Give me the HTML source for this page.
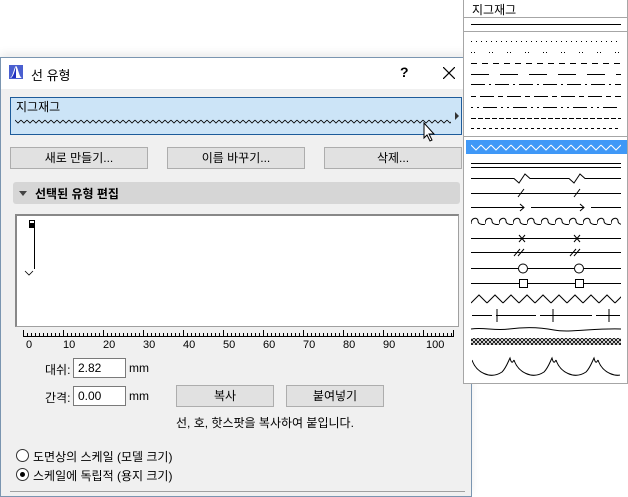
<!DOCTYPE html>
<html><head><meta charset="utf-8">
<style>
*{box-sizing:border-box;margin:0;padding:0}
body{width:628px;height:493px;background:#fff;position:relative;overflow:hidden;font-family:"Liberation Sans","Noto Sans CJK KR","NanumGothic",sans-serif;font-size:12px;color:#000}
.abs{position:absolute}
.dlg{left:0;top:57px;width:472px;height:440px;background:#f0f0f0;border:1px solid #7a95b0;box-shadow:0 -4px 8px rgba(0,0,0,0.08)}
.title{left:0;top:0;width:470px;height:31px;background:#fff}
.btn{position:absolute;height:22px;background:#e1e1e1;border:1px solid #adadad;text-align:center;line-height:20px}
.inp{position:absolute;width:53px;height:20px;background:#fff;border:1px solid #7a7a7a;padding-left:4px;line-height:18px}
.radio{position:absolute;width:13px;height:13px;border:1px solid #333;border-radius:50%;background:#fff}
</style></head><body>
<div class="abs dlg">
 <div class="abs title">
  <svg class="abs" style="left:8px;top:7px" width="14" height="14"><rect x="0" y="0" width="14" height="14" fill="#4a5fd0"/><path d="M1 13 C4 12 5 2 7 1 C9 2 10 12 13 13Z" fill="#fff"/><path d="M2 13 C5 11 6 4 7 2 L7 13Z" fill="#2030c0"/></svg>
  <div class="abs" style="left:30px;top:7px;font-size:13px">선 유형</div>
  <div class="abs" style="left:399px;top:6px;font-size:14px;font-weight:bold">?</div>
  <svg class="abs" style="left:442px;top:9px" width="12" height="12"><path d="M0 0L12 12M12 0L0 12" stroke="#000" stroke-width="1.2"/></svg>
 </div>
 <div class="abs" style="left:9px;top:39px;width:452px;height:38px;background:#cce4f7;border:1px solid #1d5b9a">
  <div class="abs" style="left:5px;top:0px">지그재그</div>
  <svg class="abs" style="left:4px;top:20px" width="436" height="8"><defs><pattern id="zz" width="6" height="8" patternUnits="userSpaceOnUse"><path d="M0 2L3 5L6 2" fill="none" stroke="#000" stroke-width="0.8"/></pattern></defs><rect width="436" height="8" fill="url(#zz)"/></svg>
  <svg class="abs" style="left:444px;top:14px" width="5" height="8"><path d="M0 0L4 4L0 8Z" fill="#333"/></svg>
 </div>
 <svg class="abs" style="left:422px;top:64px" width="14" height="20"><path d="M1 1L1 16L4 13L7 19L9 18L6 12L11 12Z" fill="#fff" stroke="#000"/></svg>
 <div class="btn" style="left:9px;top:89px;width:138px">새로 만들기...</div>
 <div class="btn" style="left:166px;top:89px;width:138px">이름 바꾸기...</div>
 <div class="btn" style="left:323px;top:89px;width:138px">삭제...</div>
 <div class="abs" style="left:12px;top:124px;width:447px;height:22px;background:#d6d6d6;border-radius:3px">
  <svg class="abs" style="left:6px;top:9px" width="8" height="5"><path d="M0 0L8 0L4 5Z" fill="#444"/></svg>
  <div class="abs" style="left:22px;top:3px;font-weight:bold">선택된 유형 편집</div>
 </div>
 <div class="abs" style="left:14px;top:156px;width:444px;height:113px;background:#fff;border:1px solid #a0a0a0;border-top:2px solid #888;border-left:2px solid #888">
  <svg class="abs" style="left:6px;top:3px" width="20" height="60"><rect x="6.5" y="1.5" width="5" height="3" fill="#fff" stroke="#000" stroke-width="1"/><rect x="6" y="5" width="6" height="4" fill="#000"/><line x1="11.5" y1="9" x2="11.5" y2="50" stroke="#000"/><path d="M2 52L6 56L10 52" fill="none" stroke="#000" stroke-width="0.8"/></svg>
 </div>
 <svg class="abs" style="left:20px;top:272px" width="440" height="10">
  <defs><pattern id="tk" x="2" width="4" height="10" patternUnits="userSpaceOnUse"><line x1="0.5" y1="3" x2="0.5" y2="7" stroke="#000"/></pattern></defs>
  <rect x="2" y="0" width="432" height="10" fill="url(#tk)"/>
  <line x1="2" y1="6.5" x2="433" y2="6.5" stroke="#000"/>
  <g stroke="#000"><line x1="2.5" y1="0" x2="2.5" y2="7"/><line x1="42.5" y1="0" x2="42.5" y2="7"/><line x1="82.5" y1="0" x2="82.5" y2="7"/><line x1="122.5" y1="0" x2="122.5" y2="7"/><line x1="162.5" y1="0" x2="162.5" y2="7"/><line x1="202.5" y1="0" x2="202.5" y2="7"/><line x1="242.5" y1="0" x2="242.5" y2="7"/><line x1="282.5" y1="0" x2="282.5" y2="7"/><line x1="322.5" y1="0" x2="322.5" y2="7"/><line x1="362.5" y1="0" x2="362.5" y2="7"/><line x1="402.5" y1="0" x2="402.5" y2="7"/><line x1="432.5" y1="0" x2="432.5" y2="7"/></g>
 </svg>
 <div class="abs" style="left:0;top:281px;font-size:11px;color:#000">
  <span class="abs" style="left:25px">0</span><span class="abs" style="left:62px">10</span><span class="abs" style="left:102px">20</span><span class="abs" style="left:142px">30</span><span class="abs" style="left:182px">40</span><span class="abs" style="left:222px">50</span><span class="abs" style="left:262px">60</span><span class="abs" style="left:302px">70</span><span class="abs" style="left:342px">80</span><span class="abs" style="left:382px">90</span><span class="abs" style="left:425px">100</span>
 </div>
 <div class="abs" style="left:44px;top:303px">대쉬:</div>
 <div class="inp" style="left:72px;top:300px">2.82</div>
 <div class="abs" style="left:128px;top:303px">mm</div>
 <div class="abs" style="left:44px;top:331px">간격:</div>
 <div class="inp" style="left:72px;top:328px">0.00</div>
 <div class="abs" style="left:128px;top:331px">mm</div>
 <div class="btn" style="left:175px;top:327px;width:98px">복사</div>
 <div class="btn" style="left:285px;top:327px;width:98px">붙여넣기</div>
 <div class="abs" style="left:175px;top:356px">선, 호, 핫스팟을 복사하여 붙입니다.</div>
 <div class="radio" style="left:15px;top:391px"></div>
 <div class="abs" style="left:32px;top:390px">도면상의 스케일 (모델 크기)</div>
 <div class="radio" style="left:15px;top:410px"><div style="position:absolute;left:3px;top:3px;width:5px;height:5px;border-radius:50%;background:#000"></div></div>
 <div class="abs" style="left:32px;top:409px">스케일에 독립적 (용지 크기)</div>
 <div class="abs" style="left:9px;top:433px;width:455px;height:1px;background:#a0a0a0"></div>
</div>

<div class="abs" style="left:463px;top:0;width:165px;height:384px;background:#fff;border:1px solid #a6a6a6;border-top:none">
 <div class="abs" style="left:8px;top:1px">지그재그</div>
 <svg class="abs" style="left:0;top:0" width="164" height="384">
  <defs>
   <pattern id="wz" x="7" y="142" width="10" height="12" patternUnits="userSpaceOnUse"><path d="M0 3L5 8L10 3" fill="none" stroke="#fff"/></pattern>
   <pattern id="bz" x="7" y="293" width="16" height="12" patternUnits="userSpaceOnUse"><path d="M0 10L8 2L16 10" fill="none" stroke="#000"/></pattern>
   <pattern id="wv" x="7" y="214" width="14" height="14" patternUnits="userSpaceOnUse"><path d="M0 10C0 3 7 3 7 7C7 11 14 11 14 10" fill="none" stroke="#000"/></pattern>
   <pattern id="arc" x="8" y="356" width="42" height="26" patternUnits="userSpaceOnUse"><path d="M0 4C4 16 18 24 30 16C34 12 36 6 38 2C39 6 40 8 42 4" fill="none" stroke="#000"/></pattern>
   <pattern id="ht" width="4" height="4" patternUnits="userSpaceOnUse"><path d="M0 4L4 0M0 0L4 4" stroke="#000" stroke-width="0.9"/></pattern>
  </defs>
  <line x1="0" y1="17.5" x2="164" y2="17.5" stroke="#a6a6a6"/>
  <line x1="7" y1="24.5" x2="157" y2="24.5" stroke="#000"/>
  <line x1="0" y1="31.5" x2="164" y2="31.5" stroke="#a6a6a6"/>
  <g stroke="#000" fill="none">
   <line x1="7" y1="41.5" x2="157" y2="41.5" stroke-dasharray="1 4"/>
   <line x1="7" y1="52.5" x2="157" y2="52.5" stroke-dasharray="1 2 1 14"/>
   <line x1="7" y1="63.5" x2="157" y2="63.5" stroke-dasharray="6 5"/>
   <line x1="7" y1="74.5" x2="157" y2="74.5" stroke-dasharray="18 11"/>
   <line x1="7" y1="84.5" x2="157" y2="84.5" stroke-dasharray="14 4 2 4"/>
   <line x1="7" y1="96.5" x2="157" y2="96.5" stroke-dasharray="5 4 14 4"/>
   <line x1="7" y1="107.5" x2="157" y2="107.5" stroke-dasharray="2 4 2 4 14 4"/>
   <line x1="7" y1="118.5" x2="157" y2="118.5" stroke-dasharray="5 2"/>
   <line x1="7" y1="128.5" x2="157" y2="128.5" stroke-dasharray="3 3"/>
  </g>
  <line x1="0" y1="136.5" x2="164" y2="136.5" stroke="#a6a6a6"/>
  <rect x="2" y="140" width="161" height="14" fill="#3f98f7"/>
  <rect x="7" y="142" width="150" height="12" fill="url(#wz)"/>
  <g stroke="#000" fill="none">
   <line x1="7" y1="163.5" x2="157" y2="163.5"/><line x1="7" y1="167.5" x2="157" y2="167.5"/>
   <path d="M7 178.5H50L55 183L61 174L66 178.5H105L110 183L116 174L121 178.5H157"/>
   <path d="M7 193.5H157M54 197L60 189M110 197L116 189"/>
   <path d="M7 207.5H60M67 207.5H120M127 207.5H157M56 204L60 207.5L56 211M116 204L120 207.5L116 211"/>
   <rect x="7" y="214" width="150" height="14" fill="url(#wv)" stroke="none"/>
   <path d="M7 238.5H157M55 235L61 242M55 242L61 235M110 235L116 242M110 242L116 235"/>
   <path d="M7 252.5H157M50 256L56 249M54 256L60 249M106 256L112 249M110 256L116 249"/>
   <path d="M7 268.5H54M64 268.5H110M120 268.5H157"/><circle cx="59" cy="268.5" r="4.5"/><circle cx="115" cy="268.5" r="4.5"/>
   <path d="M7 283.5H55M64 283.5H111M120 283.5H157"/><rect x="55.5" y="279.5" width="8" height="8"/><rect x="111.5" y="279.5" width="8" height="8"/>
   <rect x="7" y="293" width="150" height="12" fill="url(#bz)" stroke="none"/>
   <path d="M8 315.5H28M32 315.5H72M76 315.5H128M132 315.5H156M33 309V322M89 309V322M145 309V322"/>
   <path d="M7 329C20 327 30 331 45 329S75 327 90 330S130 328 157 329"/>
  </g>
  <rect x="7" y="338" width="150" height="7" fill="url(#ht)"/>
  <rect x="8" y="356" width="148" height="26" fill="url(#arc)"/>
 </svg>
</div>
</body></html>
